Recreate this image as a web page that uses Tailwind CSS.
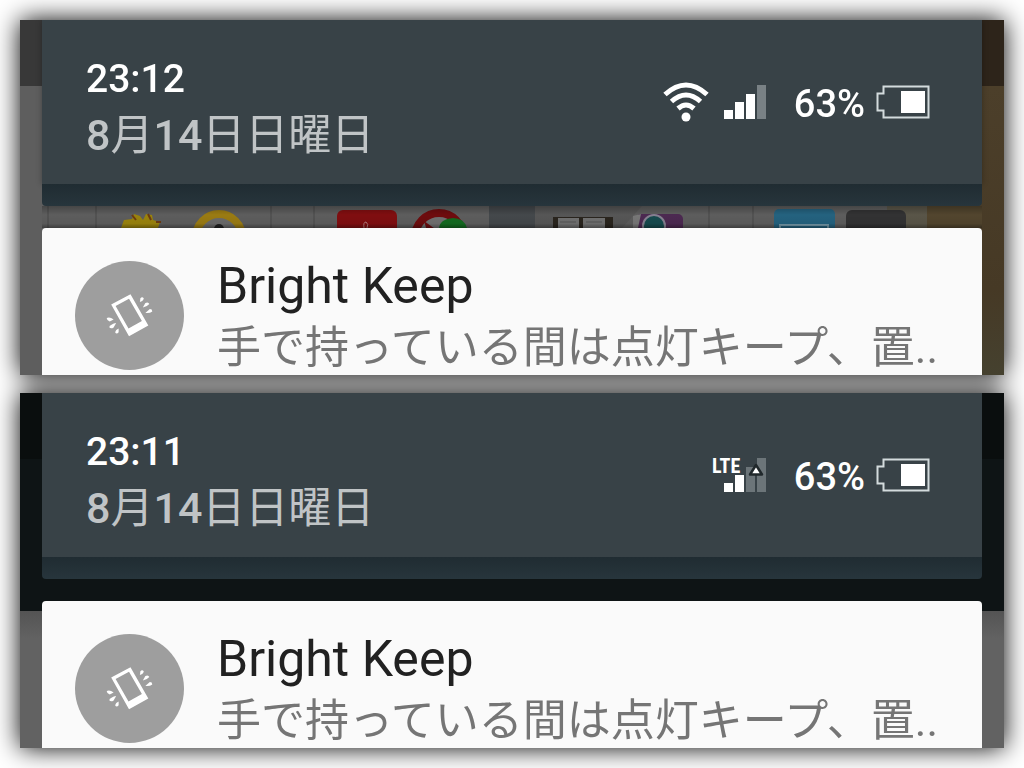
<!DOCTYPE html>
<html lang="ja">
<head>
    <meta charset="UTF-8">
    <meta name="viewport" content="width=device-width, initial-scale=1.0">
    <title>Bright Keep</title>
    <script src="https://cdn.jsdelivr.net/npm/@tailwindcss/browser@4"></script>
</head>
<body class="bg-white font-[Roboto,'Noto_Sans_CJK_JP',sans-serif] overflow-x-hidden">
    <!-- Shared icons -->
    <svg class="hidden">
        <symbol id="battery" viewBox="0 0 54 34">
            <path d="M7.5 1.5H52.5V32.5H7.5V25.5H1.5V8.5H7.5Z" fill="none" stroke="#d3dbdd" stroke-width="2"/>
            <rect x="25" y="6" width="24" height="22" fill="#fff"/>
        </symbol>
        <symbol id="shake-phone" viewBox="0 0 110 110">
            <path fill="#fff" fill-rule="evenodd" d="M36.5 44L56 33.5L74 65L54.5 76ZM41 45.5L54.5 38L67.5 60.5L54 68Z"/>
            <g fill="#fff">
                <path d="M65.5 41.5L66 37.5Q68 35.5 69.5 38Q68.5 40.5 65.5 41.5Z"/>
                <path d="M68.5 47L71 42.5Q74 41 75 43.5Q73 46 68.5 47Z"/>
                <path d="M71 52.5L75.5 48.5Q78 48.5 78 51Q75.5 53 71 52.5Z"/>
                <path d="M39 59L35 61Q32 60 32 57.5Q35 56 39 59Z"/>
                <path d="M41.5 62.5L39 67Q36 69 34.5 66.5Q36.5 63.5 41.5 62.5Z"/>
                <path d="M44 68L44 72Q42 74.5 40.5 72Q41 69 44 68Z"/>
            </g>
        </symbol>
    </svg>

    <main class="p-5 flex flex-col gap-[18px] drop-shadow-[0_0_13px_#000]">
        <!-- Wi-Fi -->
        <section class="relative overflow-hidden">
            <div class="absolute inset-0 -z-10 flex flex-col">
                <div class="flex h-[66px]">
                    <div class="flex-1 bg-[#383838]"></div>
                    <div class="flex-1 bg-[#2d241a]"></div>
                </div>
                <div class="flex flex-1">
                    <div class="flex-1 bg-[#5e5e5e]"></div>
                    <div class="flex-1 bg-linear-to-b from-[#4c3f2a] via-[#463925] via-70% to-[#45412f]"></div>
                </div>
            </div>

            <div class="mx-[22px]">
                <header class="h-[164px] pl-[44px] pr-[52px] flex items-center justify-between bg-[#384247] shadow-[0_0_6px_rgba(0,0,0,0.3)]">
                    <div class="pt-[10px] font-medium leading-[56px]">
                        <p class="text-[39px] text-white">23:12</p>
                        <p class="text-[43px] text-[#c0c4c6]">8<span class="font-normal">月</span>14<span class="font-normal">日日曜日</span></p>
                    </div>
                    <div class="flex items-center">
                        <svg class="w-[46px] h-10" viewBox="0 0 46 40" fill="none" stroke="#fff" stroke-width="5">
                            <path d="M2 12.5Q23 -6.5 44 12.5"/>
                            <path d="M8.5 19.5Q23 6.5 37.5 19.5"/>
                            <path d="M15 26.5Q23 19.5 31 26.5"/>
                            <circle cx="23" cy="35" r="4.5" fill="#fff" stroke="none"/>
                        </svg>
                        <svg class="ml-[15px] w-[42px] h-[34px]" viewBox="0 0 42 34" fill="#fff">
                            <rect x="0" y="25" width="9" height="9"/>
                            <rect x="11" y="17" width="9" height="17"/>
                            <rect x="22" y="9" width="9" height="25"/>
                            <rect x="33" y="0" width="9" height="34" fill="#798185"/>
                        </svg>
                        <span class="ml-[28px] pt-1 text-[38px] font-medium text-white">63%</span>
                        <svg class="ml-[11px] w-[54px] h-[34px]"><use href="#battery"/></svg>
                    </div>
                </header>
                <div class="h-[22px] rounded-b bg-linear-to-b from-[#202c32] to-[#27353c]"></div>

                <!-- Home screen showing between the two cards -->
                <svg class="block w-full h-[22px]" viewBox="0 0 940 22" preserveAspectRatio="none">
                    <defs>
                        <linearGradient id="dim" x1="0" y1="0" x2="0" y2="1">
                            <stop offset="0" stop-color="#000" stop-opacity="0.25"/>
                            <stop offset="0.4" stop-color="#000" stop-opacity="0"/>
                            <stop offset="0.8" stop-color="#000" stop-opacity="0.05"/>
                            <stop offset="1" stop-color="#000" stop-opacity="0.35"/>
                        </linearGradient>
                    </defs>
                    <rect width="940" height="22" fill="#5d5d5d"/>
                    <rect x="447" width="46" height="22" fill="#44484b"/>
                    <path d="M493 0H600L580 22H493Z" fill="#565656"/>
                    <rect x="845" width="42" height="22" fill="#595548"/>
                    <rect x="885" width="55" height="22" fill="#52452e"/>
                    <path d="M6 0V22M54 0V22M229 0V22M272 0V22M667 0V22M711 0V22" stroke="#525252" stroke-width="2"/>
                    <path d="M79 22L82 14L90 13L92 8L98 10L101 14L104 8L110 9L111 14L118 16L116 22Z" fill="#9a830c"/>
                    <path d="M90 9L94 14M106 8L109 14M114 16H119" stroke="#6d3b10" stroke-width="2"/>
                    <circle cx="177" cy="31" r="23" fill="#6a6a6a" stroke="#9a7b13" stroke-width="8"/>
                    <circle cx="177" cy="23" r="5" fill="#222"/>
                    <rect x="295" y="4" width="60" height="30" rx="6" fill="#800e10"/>
                    <path d="M322 22Q321 16 324 16Q327 18 325 22" fill="none" stroke="#b27b7b"/>
                    <circle cx="397" cy="31" r="24" fill="#707070" stroke="#6e0c0e" stroke-width="8"/>
                    <path d="M382 15L396 25L386 28Z" fill="#6e0c0e"/>
                    <path d="M397 22Q398 13 411 12Q422 12 425 22Z" fill="#136b20"/>
                    <path d="M511 11H571V22H511Z" fill="#2a251e"/>
                    <path d="M516 12H537V22H516ZM541 12H563V22H541Z" fill="#707070"/>
                    <path d="M518 16H534M544 16H560" stroke="#555"/>
                    <rect x="594" y="8" width="47" height="30" rx="5" fill="#4c2951"/>
                    <path d="M591 10L599 8L596 22H591Z" fill="#777"/>
                    <circle cx="612" cy="20" r="11" fill="#164a4e" stroke="#858090" stroke-width="2"/>
                    <rect x="732" y="3" width="61" height="30" rx="5" fill="#24627f"/>
                    <path d="M738 22V19H786V22" fill="none" stroke="#7498a8" stroke-width="2"/>
                    <rect x="804" y="4" width="60" height="30" rx="6" fill="#323233"/>
                    <rect width="940" height="22" fill="url(#dim)"/>
                </svg>

                <article class="h-[147px] pl-[33px] flex overflow-hidden rounded-t bg-[#fafafa]">
                    <svg class="mt-[33px] w-[109px] h-[109px] shrink-0 rounded-full bg-[#9e9e9e]"><use href="#shake-phone"/></svg>
                    <div class="ml-[33px] pt-[27px] leading-[62px] whitespace-nowrap">
                        <h2 class="text-[50px] text-[#212121]">Bright Keep</h2>
                        <p class="text-[44px] text-[#757575]">手で持っている間は点灯キープ、置..</p>
                    </div>
                </article>
            </div>
        </section>

        <!-- LTE -->
        <section class="relative overflow-hidden">
            <div class="absolute inset-0 -z-10 flex flex-col">
                <div class="h-[66px] bg-[#0a0e0e]"></div>
                <div class="h-[152px] bg-[#0e1415]"></div>
                <div class="flex-1 bg-linear-to-b from-[#545454] to-[#626262] to-20%"></div>
            </div>

            <div class="mx-[22px]">
                <header class="h-[164px] pl-[44px] pr-[52px] flex items-center justify-between bg-[#384247]">
                    <div class="pt-[10px] font-medium leading-[56px]">
                        <p class="text-[39px] text-white">23:11</p>
                        <p class="text-[43px] text-[#c0c4c6]">8<span class="font-normal">月</span>14<span class="font-normal">日日曜日</span></p>
                    </div>
                    <div class="flex items-center">
                        <svg class="w-[54px] h-[42px]" viewBox="0 0 54 42" fill="#fff">
                            <text x="0" y="19" class="text-[20px] font-bold font-['Roboto_Condensed','Open_Sans_Condensed',Roboto,sans-serif]">LTE</text>
                            <rect x="12" y="29" width="9" height="9"/>
                            <rect x="23" y="21" width="9" height="17"/>
                            <rect x="34" y="13" width="9" height="25" fill="#6c7579"/>
                            <rect x="45" y="4" width="9" height="34" fill="#6c7579"/>
                            <path d="M44 11L50 20.5H38Z" stroke="#20282b" stroke-width="2.5" stroke-linejoin="round"/>
                        </svg>
                        <span class="ml-[28px] pt-1 text-[38px] font-medium text-white">63%</span>
                        <svg class="ml-[11px] w-[54px] h-[34px]"><use href="#battery"/></svg>
                    </div>
                </header>
                <div class="h-[22px] rounded-b bg-linear-to-b from-[#202c32] to-[#27353c]"></div>

                <article class="mt-[22px] h-[147px] pl-[33px] flex overflow-hidden rounded-t bg-[#fafafa]">
                    <svg class="mt-[33px] w-[109px] h-[109px] shrink-0 rounded-full bg-[#9e9e9e]"><use href="#shake-phone"/></svg>
                    <div class="ml-[33px] pt-[27px] leading-[62px] whitespace-nowrap">
                        <h2 class="text-[50px] text-[#212121]">Bright Keep</h2>
                        <p class="text-[44px] text-[#757575]">手で持っている間は点灯キープ、置..</p>
                    </div>
                </article>
            </div>
        </section>
    </main>
</body>
</html>
